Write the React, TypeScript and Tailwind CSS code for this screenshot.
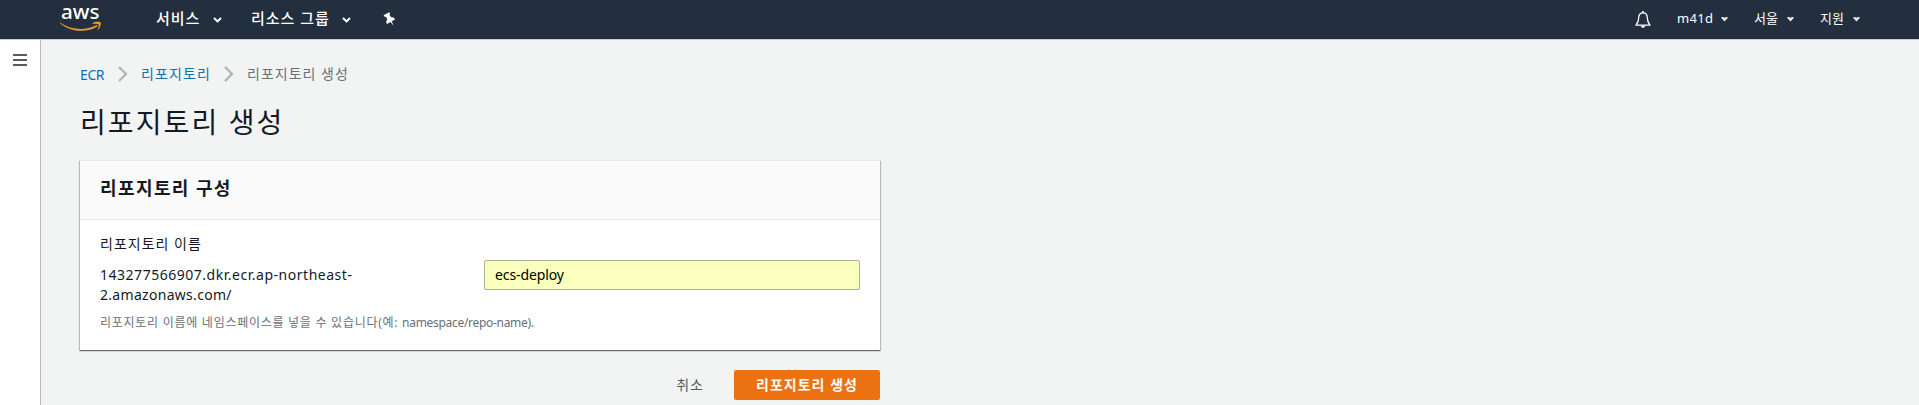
import React from 'react';

function Caret() {
  return (
    <svg viewBox="0 0 9 6" className="mt-[3px] h-1.5 w-[9px]" fill="none" stroke="#fff" strokeWidth="2">
      <path d="M1 1l3.5 3.4L8 1" />
    </svg>
  );
}

function SmallCaret() {
  return (
    <svg viewBox="0 0 7 5" className="mt-px h-[5px] w-[7px]" fill="#e8eaec">
      <path d="M0 .8L1 0h1l1.500 .8L5 0h1l1 .8L3.500 4.600z" />
    </svg>
  );
}

function AwsLogo() {
  return (
    <svg viewBox="0 -5 42 33" className="h-[33px] w-[42px] shrink-0 overflow-visible">
      <text x="1" y="14.300" fontSize="20.500" fontWeight="500" fill="#fff" textLength="38.500" lengthAdjust="spacingAndGlyphs" fontFamily="'Noto Sans', sans-serif">
        aws
      </text>
      <path d="M.5 17.700C11 25.300 26 25.600 36.300 20.200c1-.5 1.700.5.8 1.200C27.500 28 10.500 27.300.3 18.400c-.4-.4-.2-.9.2-.7z" fill="#f29a2e" />
      <path d="M32.600 18c2.300-1.700 6.600-1.600 7.900-.8.800 1.100-.2 5.800-2.500 7.600-.4.200-.6 0-.4-.4.700-1.500 1.600-4.200 1.100-5-.6-.8-3.600-.6-5.700-.7-.5 0-.7-.4-.4-.7z" fill="#f29a2e" />
    </svg>
  );
}

function Bell() {
  return (
    <svg viewBox="0 0 16 17" className="h-[17px] w-4" fill="none" stroke="#fff" strokeWidth="1.300">
      <path d="M8 1.800c-3 0-4.300 2.200-4.300 5C3.700 10.500 2.800 12 1 14.200h14c-1.800-2.200-2.700-3.700-2.700-7.400 0-2.800-1.300-5-4.300-5z" strokeLinejoin="round" />
      <path d="M8 .2v1.600" strokeWidth="2" />
      <path d="M5.800 14.800h4.400c-.2 1.400-1 2-2.200 2s-2-.6-2.200-2z" fill="#fff" stroke="none" />
    </svg>
  );
}

function Pin() {
  return (
    <svg viewBox="0 0 14 14" className="h-3.5 w-3.5" fill="#fff">
      <path d="M.6 3.200L6.200.2l.9 1.500-.7.9 1.700 2.600 2.700.2 1.200 2.100-3.300 1.800 1.900 4.400-3.100-3.700-3.500 1.900-1-1.800 1.300-2.600L3 4.700l-1.500.1z" />
    </svg>
  );
}

function Separator() {
  return (
    <svg viewBox="0 0 10 16" className="h-4 w-2.5" fill="none" stroke="#aab7b8" strokeWidth="2.400">
      <path d="M1 1l7 7-7 7" />
    </svg>
  );
}

export default function App() {
  return (
    <div className="flex h-[405px] w-full flex-col overflow-hidden bg-[#f2f4f4] font-['Noto_Sans','Noto_Sans_CJK_KR',sans-serif] whitespace-nowrap text-[#16191f]">
      <header className="flex h-10 shrink-0 items-start border-b border-[#c9ced6] bg-[#232f3e] text-white">
        <div className="ml-[60px]"><AwsLogo /></div>
        <div className="ml-[54px] flex h-[36px] items-center text-[15px] font-medium">
          <span className="w-[57px] tracking-[0.9px]">서비스</span>
          <Caret />
          <span className="ml-[29px] w-[91px] tracking-[1px]">리소스 그룹</span>
          <Caret />
          <span className="ml-8 mt-0.5"><Pin /></span>
        </div>
        <div className="mr-[59px] ml-auto flex h-[38px] items-center text-[13px]">
          <Bell />
          <span className="ml-[26px] w-[44px] tracking-[0.3px]">m41d</span>
          <SmallCaret />
          <span className="ml-[26px] w-[33px]">서울</span>
          <SmallCaret />
          <span className="ml-[26px] w-[33px]">지원</span>
          <SmallCaret />
        </div>
      </header>

      <div className="flex min-h-0 flex-1">
        <aside className="w-[41px] shrink-0 border-r border-[#b5bebe] bg-white pt-3.5 pl-[13px]">
          <div className="flex w-3.5 flex-col gap-[3px]">
            <i className="h-0.5 bg-[#545b64]" />
            <i className="h-0.5 bg-[#545b64]" />
            <i className="h-0.5 bg-[#545b64]" />
          </div>
        </aside>

        <main className="ml-[39px] w-[800px]">
          <nav className="mt-[22px] flex h-6 items-center text-[14px] text-[#0e6fae]">
            <span className="w-[38px] tracking-[-0.4px]">ECR</span>
            <Separator />
            <span className="ml-[13px] w-[83px] pb-0.5 tracking-[1.1px]">리포지토리</span>
            <Separator />
            <span className="ml-[13px] pb-0.5 tracking-[1px] text-[#687078]">리포지토리 생성</span>
          </nav>
          <h1 className="mt-4 h-10 text-[28px] leading-10 tracking-[2.1px]">리포지토리 생성</h1>

          <section className="mt-[18px] flex h-[190px] flex-col border-t border-[#e6e9e9] bg-white shadow-[0_1px_1px_0_rgba(0,28,36,0.4),1px_1px_1px_0_rgba(0,28,36,0.2),-1px_1px_1px_0_rgba(0,28,36,0.2)]">
            <h2 className="flex h-[59px] shrink-0 items-center border-b border-[#eaeded] bg-[#fafafa] pb-1 pl-5 text-[18px] font-bold tracking-[1.4px]">
              리포지토리 구성
            </h2>
            <div className="flex flex-col px-5 pt-[13px] text-[14px]">
              <label className="h-[22px] leading-[22px] tracking-[1px]">리포지토리 이름</label>
              <div className="mt-[5px] flex">
                <div className="w-[384px] pt-[5px] leading-5 tracking-[0.52px]">
                  143277566907.dkr.ecr.ap-northeast-
                  <br />
                  <span className="tracking-[0.3px]">2.amazonaws.com/</span>
                </div>
                <input
                  defaultValue="ecs-deploy"
                  className="h-[30px] w-[376px] rounded-[2px] border border-[#a9b398] bg-[#faffbd] px-[10px] pb-0.5 tracking-[-0.1px] text-black outline-none"
                />
              </div>
              <p className="mt-[8px] text-[12px] leading-5 tracking-[-0.3px] text-[#687078]">
                <span className="tracking-[0.73px]">리포지토리 이름에 네임스페이스를 넣을 수 있습니다(예: </span>namespace/repo-name).
              </p>
            </div>
          </section>

          <div className="mt-5 flex h-[30px] items-center justify-end text-[14px]">
            <button className="mr-[30px] pb-0.5 tracking-[1px] text-[#545b64]">취소</button>
            <button className="h-[30px] w-[146px] rounded-[2px] bg-[#ec7211] pb-0.5 text-center font-bold tracking-[1px] text-white">리포지토리 생성</button>
          </div>
        </main>
      </div>
    </div>
  );
}
